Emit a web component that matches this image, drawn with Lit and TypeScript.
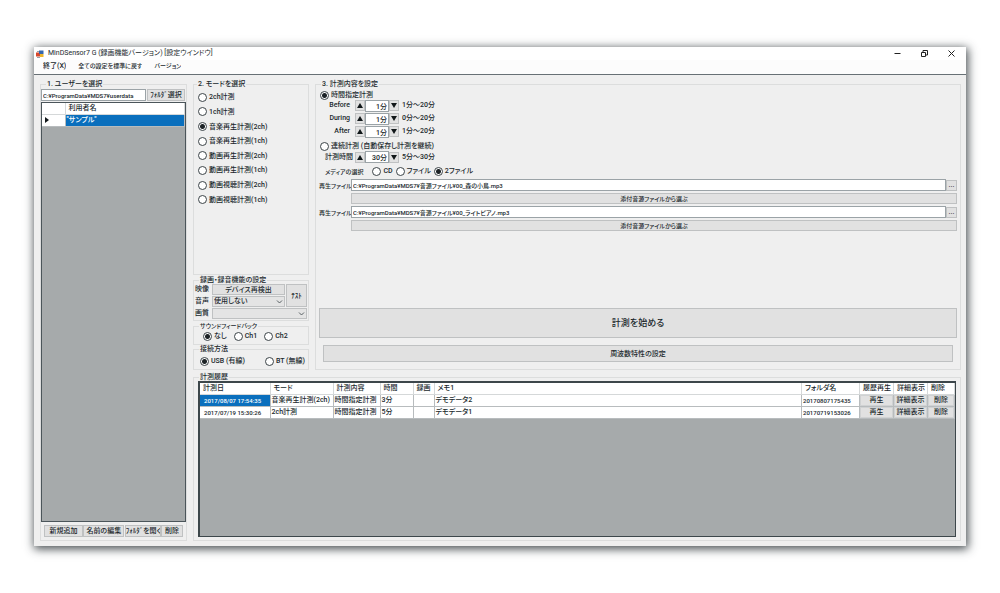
import { LitElement, html, css, svg } from "lit";
import { customElement, property, state } from "lit/decorators.js";
import { classMap } from "lit/directives/class-map.js";

const base = css`
  * {
    box-sizing: border-box;
  }
  button,
  input,
  select {
    font: inherit;
    color: inherit;
    margin: 0;
    border-radius: 0;
    min-width: 0;
    font-feature-settings: inherit;
  }
  button {
    padding: 0;
    border: 1px solid #bfc1c2;
    background: #e1e1e1;
    white-space: nowrap;
    overflow: hidden;
    line-height: 8px;
  }
  input[type="text"] {
    appearance: none;
    padding: 0 1px;
    border: 1px solid #9ba3a7;
    background: #fff;
    height: 12px;
    line-height: 10px;
  }
`;

@customElement("radio-option")
class RadioOption extends LitElement {
  @property() label = "";
  @property({ type: Boolean }) checked = false;

  static styles = [
    base,
    css`
      :host {
        display: block;
      }
      label {
        display: flex;
        align-items: center;
        gap: 2px;
        white-space: nowrap;
        line-height: 10px;
      }
      input {
        appearance: none;
        flex: none;
        width: 9px;
        height: 9px;
        border: 1px solid #3c4448;
        border-radius: 50%;
        background: #fff;
      }
      input:checked {
        background: radial-gradient(circle, #1c2226 0 2px, #fff 3px);
      }
    `,
  ];

  render() {
    return html`<label
      ><input
        type="radio"
        .checked=${this.checked}
        @click=${(e: Event) => {
          e.preventDefault();
          this.dispatchEvent(new CustomEvent("pick"));
        }}
      />${this.label}</label
    >`;
  }
}

@customElement("radio-set")
class RadioSet extends LitElement {
  @property({ type: Array }) options: string[] = [];
  @property({ type: Number }) selected = 0;

  static styles = css`
    :host {
      display: flex;
    }
    :host([column]) {
      display: grid;
      grid-auto-rows: 1fr;
      align-items: center;
      height: 117px;
    }
    :host([media]) {
      gap: 3px;
    }
    :host([spread]) {
      justify-content: space-between;
    }
    :host([feedback]) {
      gap: 7px;
    }
  `;

  render() {
    return this.options.map(
      (o, i) =>
        html`<radio-option
          label=${o}
          ?checked=${i === this.selected}
          @pick=${() => (this.selected = i)}
        ></radio-option>`
    );
  }
}

interface Step {
  name: string;
  value: string;
  range: string;
}

const steps: Step[] = [
  { name: "Before", value: "1分", range: "1分～20分" },
  { name: "During", value: "1分", range: "0分～20分" },
  { name: "After", value: "1分", range: "1分～20分" },
];

const modes = [
  "2ch計測",
  "1ch計測",
  "音楽再生計測(2ch)",
  "音楽再生計測(1ch)",
  "動画再生計測(2ch)",
  "動画再生計測(1ch)",
  "動画視聴計測(2ch)",
  "動画視聴計測(1ch)",
];

const files = [
  "C:¥ProgramData¥MDS7¥音源ファイル¥00_森の小鳥.mp3",
  "C:¥ProgramData¥MDS7¥音源ファイル¥00_ライトピアノ.mp3",
];

const history = [
  ["2017/08/07 17:54:35", "音楽再生計測(2ch)", "時間指定計測", "3分", "", "デモデータ2", "20170807175435"],
  ["2017/07/19 15:30:26", "2ch計測", "時間指定計測", "5分", "", "デモデータ1", "20170719153026"],
];

const historyHeads = [
  "計測日", "モード", "計測内容", "時間", "録画", "メモ1", "フォルダ名", "履歴再生", "詳細表示", "削除",
];

const chevron = svg`<path d="M1 1.5 3.5 4 6 1.5" fill="none" stroke="#4a5256" stroke-width=".9"/>`;

@customElement("app-root")
class AppRoot extends LitElement {
  @state() timed = true;

  static styles = [
    base,
    css`
      :host {
        display: flex;
        box-sizing: border-box;
        min-height: 100vh;
        padding: 47px 34px;
        background: #fff;
        color: #20282c;
        font: 500 7px/9px Roboto, "Noto Sans CJK JP", sans-serif;
        font-feature-settings: "palt";
      }
      .window {
        flex: 1;
        display: flex;
        flex-direction: column;
        min-width: 0;
        background: #efefef;
        box-shadow: 1px 2px 9px 1px rgba(40, 48, 52, 0.85);
      }
      .title {
        display: flex;
        align-items: center;
        height: 13px;
        padding: 0 10px 0 2px;
        gap: 4px;
        background: #fff;
        font-weight: 400;
      }
      .title h1 {
        flex: 1;
        margin: 0;
        font: inherit;
      }
      .title .controls {
        display: flex;
        gap: 17px;
      }
      .title .controls button {
        border: 0;
        background: none;
        width: 10px;
        height: 10px;
        display: grid;
        place-items: center;
      }
      nav {
        display: flex;
        align-items: center;
        gap: 12px;
        height: 15px;
        padding: 0 9px 2px;
        background: #fcfcfc;
        border-bottom: 1px solid #677075;
      }
      nav button {
        border: 0;
        background: none;
      }
      .small {
        font-size: 6px;
      }
      .body {
        flex: 1;
        display: grid;
        grid-template-columns: 147px 116px minmax(0, 1fr);
        grid-template-rows: auto 1fr;
        gap: 3px 6px;
        padding: 5px 5px 5px 6px;
      }
      fieldset {
        margin: 0;
        padding: 0;
        min-width: 0;
        border: 1px solid #dcdddd;
      }
      legend {
        margin-left: 5px;
        padding: 0 1px;
        line-height: 8px;
        height: 8px;
      }
      .users {
        grid-row: span 2;
      }
      .users-inner {
        display: flex;
        flex-direction: column;
        height: 100%;
        padding: 1px 0;
      }
      .users .path {
        display: grid;
        grid-template-columns: 1fr 38px;
        gap: 1px;
        padding-right: 1px;
        height: 12px;
      }
      .fill {
        flex: 1;
        background: #a6aaab;
        border: 1px solid #4b555a;
      }
      .users .fill {
        margin-top: 1px;
      }
      .users .actions {
        display: grid;
        grid-template-columns: 39px 41px 36px 22px;
        justify-content: space-between;
        height: 12px;
        margin: 3px 3px 2px;
      }
      table {
        border-collapse: collapse;
        table-layout: fixed;
        width: 100%;
        background: #fff;
      }
      th,
      td {
        height: 12px;
        padding: 0 1px;
        border: 1px solid #b8bcbe;
        border-top: 0;
        border-left: 0;
        font-weight: inherit;
        text-align: left;
        white-space: nowrap;
        overflow: hidden;
        line-height: 9px;
      }
      th {
        height: 11px;
        padding-left: 3px;
        border-color: #d5d8d9;
      }
      .current {
        background: #0a6fbd;
        color: #fff;
      }
      .marker {
        width: 23px;
        padding: 0 0 0 3px;
        line-height: 0;
      }
      .stack {
        display: flex;
        flex-direction: column;
      }
      .modes {
        height: 195px;
        padding: 0 4px;
      }
      .modes legend {
        margin-left: -1px;
      }
      .modes radio-set {
        margin-top: 2px;
      }
      .record {
        height: 45px;
        margin-top: 1px;
      }
      .record-grid {
        display: grid;
        grid-template-columns: 16px 1fr 21px;
        grid-template-rows: 11px 11px 11px;
        gap: 1px;
        align-items: center;
        padding: 0 1px;
      }
      .record-grid button {
        height: 100%;
      }
      .record-grid .test {
        grid-column: 3;
        grid-row: 1 / 3;
      }
      .record-grid .wide {
        grid-column: 2 / 4;
      }
      .pick {
        display: grid;
        height: 100%;
        align-items: center;
      }
      .pick > * {
        grid-area: 1 / 1;
      }
      .pick select {
        appearance: none;
        width: 100%;
        height: 100%;
        padding: 0 1px;
        border: 1px solid #bfc1c2;
        background: #e4e4e4;
        line-height: 9px;
      }
      .pick svg {
        justify-self: end;
        margin-right: 2px;
        pointer-events: none;
      }
      .feedback {
        height: 23px;
        margin-top: 1px;
      }
      .feedback radio-set {
        padding: 1px 9px 0;
      }
      .link {
        height: 25px;
      }
      .link radio-set {
        padding: 3px 3px 0 6px;
      }
      .content-inner {
        display: flex;
        flex-direction: column;
        height: 100%;
        padding: 2px 3px 7px;
      }
      .content-inner > radio-option {
        padding: 0 1px;
        height: 9px;
      }
      .content-inner > radio-option.second {
        height: 13px;
        padding-top: 3px;
      }
      .step {
        display: grid;
        grid-template-columns: 36px 10px 24px 10px auto;
        justify-content: start;
        align-items: center;
        height: 13px;
      }
      .step label {
        text-align: right;
        white-space: nowrap;
        padding-right: 5px;
      }
      .step.late label {
        padding-right: 2px;
      }
      .step button {
        height: 11px;
        display: grid;
        place-items: center;
      }
      .step input {
        text-align: right;
      }
      .step .range {
        padding-left: 3px;
      }
      .late {
        height: 12px;
      }
      .media {
        display: flex;
        align-items: center;
        gap: 9px;
        height: 16px;
        padding-left: 6px;
      }
      .file {
        display: grid;
        grid-template-columns: 32px minmax(0, 1fr) 11px;
        row-gap: 2px;
        align-items: center;
        margin-bottom: 2px;
      }
      .file label {
        white-space: nowrap;
      }
      .file .choose {
        grid-column: 2 / 4;
        height: 11px;
      }
      .file .more {
        height: 11px;
      }
      .start {
        margin-top: auto;
        height: 30px;
        font-size: 9px;
        line-height: 14px;
      }
      .tuning {
        height: 17px;
        margin: 7px 4px 0;
      }
      .history {
        grid-column: 2 / 4;
      }
      .history-inner {
        display: flex;
        flex-direction: column;
        height: 100%;
        padding: 0 4px 3px;
      }
      .sheet {
        flex: 1;
        background: #a6aaab;
        border: 2px solid #3d474b;
        border-right-width: 1px;
        border-bottom-width: 1px;
      }
      .c0 { width: 70px; }
      .c1 { width: 63px; }
      .c2 { width: 47px; }
      .c3 { width: 33px; }
      .c4 { width: 21px; }
      .c6 { width: 58px; }
      .c7, .c8 { width: 34px; }
      .c9 { width: 27px; }
      td.date {
        padding-left: 4px;
      }
      td.act {
        padding: 0;
      }
      td.act button {
        display: block;
        width: 100%;
        height: 11px;
        border-color: #d0d2d3;
      }
    `,
  ];

  private arrow(up: boolean) {
    return html`<svg width="6" height="5" viewBox="0 0 6 5">
      <path d=${up ? "M3 0 6 5H0Z" : "M3 5 0 0H6Z"} fill="#111719" />
    </svg>`;
  }

  private step(s: Step, id: string, late = false) {
    return html`<div class=${classMap({ step: true, late })}>
      <label for=${id}>${s.name}</label>
      <button aria-label="${s.name} +">${this.arrow(true)}</button>
      <input id=${id} type="text" .value=${s.value} />
      <button aria-label="${s.name} -">${this.arrow(false)}</button>
      <span class="range">${s.range}</span>
    </div>`;
  }

  render() {
    return html`<div class="window">
      <header class="title">
        <svg width="8" height="8" viewBox="0 0 8 8">
          <rect x="0" y="2.5" width="4" height="4" fill="#d8482c" />
          <rect x="3" y=".5" width="4.5" height="3.5" fill="#3566ad" />
          <rect x="4" y="4" width="3.5" height="3" fill="#edb62e" />
          <path d="M1 1.5h2M1 7.5h3" stroke="#7b8890" stroke-width=".8" />
        </svg>
        <h1>MinDSensor7 G (録画機能バージョン) [設定ウインドウ]</h1>
        <div class="controls">
          <button aria-label="最小化">
            <svg width="7" height="7"><path d="M.5 3.5h6" stroke="#222" /></svg>
          </button>
          <button aria-label="元に戻す">
            <svg width="7" height="7" fill="none" stroke="#222">
              <path d="M.5 2.5h4v4h-4zM2 2V.5h4.5V5H5" />
            </svg>
          </button>
          <button aria-label="閉じる">
            <svg width="7" height="7"><path d="M.5.5l6 6M6.5.5l-6 6" stroke="#222" /></svg>
          </button>
        </div>
      </header>
      <nav>
        <button>終了(X)</button>
        <button class="small">全ての設定を標準に戻す</button>
        <button class="small">バージョン</button>
      </nav>
      <main class="body">
        <fieldset class="users">
          <legend>1. ユーザーを選択</legend>
          <div class="users-inner">
            <div class="path">
              <input
                class="small"
                type="text"
                aria-label="ユーザーフォルダ"
                .value=${"C:¥ProgramData¥MDS7¥userdata"}
              />
              <button>ﾌｫﾙﾀﾞ選択</button>
            </div>
            <div class="fill">
              <table>
                <tr>
                  <th class="marker"></th>
                  <th>利用者名</th>
                </tr>
                <tr>
                  <td class="marker">
                    <svg width="4" height="6"><path d="M0 0 4 3 0 6Z" fill="#111719" /></svg>
                  </td>
                  <td class="current">"サンプル"</td>
                </tr>
              </table>
            </div>
            <div class="actions">
              <button>新規追加</button>
              <button>名前の編集</button>
              <button>ﾌｫﾙﾀﾞを開く</button>
              <button>削除</button>
            </div>
          </div>
        </fieldset>

        <div class="stack">
          <fieldset class="modes">
            <legend>2. モードを選択</legend>
            <radio-set column .options=${modes} .selected=${2}></radio-set>
          </fieldset>
          <fieldset class="record">
            <legend>録画・録音機能の設定</legend>
            <div class="record-grid">
              <span>映像</span>
              <button>デバイス再検出</button>
              <button class="test">ﾃｽﾄ</button>
              <label for="audio">音声</label>
              <div class="pick">
                <select id="audio"><option>使用しない</option></select>
                <svg width="7" height="6">${chevron}</svg>
              </div>
              <label for="quality">画質</label>
              <div class="pick wide">
                <select id="quality"><option></option></select>
                <svg width="7" height="6">${chevron}</svg>
              </div>
            </div>
          </fieldset>
          <fieldset class="feedback">
            <legend class="small">サウンドフィードバック</legend>
            <radio-set feedback .options=${["なし", "Ch1", "Ch2"]}></radio-set>
          </fieldset>
          <fieldset class="link">
            <legend>接続方法</legend>
            <radio-set spread .options=${["USB (有線)", "BT (無線)"]}></radio-set>
          </fieldset>
        </div>

        <fieldset class="content">
          <legend>3. 計測内容を設定</legend>
          <div class="content-inner">
            <radio-option
              label="時間指定計測"
              ?checked=${this.timed}
              @pick=${() => (this.timed = true)}
            ></radio-option>
            ${steps.map((s, i) => this.step(s, `step${i}`))}
            <radio-option
              class="second"
              label="連続計測 (自動保存し計測を継続)"
              ?checked=${!this.timed}
              @pick=${() => (this.timed = false)}
            ></radio-option>
            ${this.step({ name: "計測時間", value: "30分", range: "5分～30分" }, "span", true)}
            <div class="media">
              <span class="small">メディアの選択</span>
              <radio-set media .options=${["CD", "ファイル", "2ファイル"]} .selected=${2}></radio-set>
            </div>
            ${files.map(
              (f, i) => html`<div class="file">
                <label class="small" for="file${i}">再生ファイル</label>
                <input class="small" id="file${i}" type="text" .value=${f} />
                <button class="more">...</button>
                <button class="choose small">添付音源ファイルから選ぶ</button>
              </div>`
            )}
            <button class="start">計測を始める</button>
            <button class="tuning">周波数特性の設定</button>
          </div>
        </fieldset>

        <fieldset class="history">
          <legend>計測履歴</legend>
          <div class="history-inner">
            <div class="sheet">
              <table>
                <tr>
                  ${historyHeads.map((h, i) => html`<th class="c${i}">${h}</th>`)}
                </tr>
                ${history.map(
                  (row, r) => html`<tr>
                    ${row.map(
                      (c, i) =>
                        html`<td
                          class=${classMap({
                            date: i === 0,
                            small: i === 0 || i === 6,
                            current: i === 0 && r === 0,
                          })}
                        >${c}</td>`
                    )}
                    ${["再生", "詳細表示", "削除"].map(
                      (a) => html`<td class="act"><button>${a}</button></td>`
                    )}
                  </tr>`
                )}
              </table>
            </div>
          </div>
        </fieldset>
      </main>
    </div>`;
  }
}
